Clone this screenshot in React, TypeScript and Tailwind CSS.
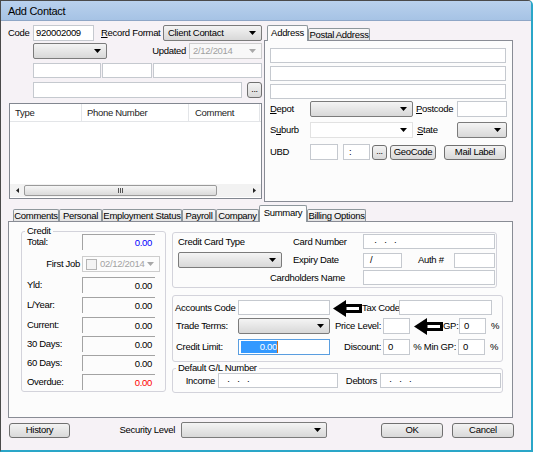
import React from 'react';

type P = { className?: string; children?: React.ReactNode };

const Caret = ({ color = '#000' }: { color?: string }) => (
  <svg width="7" height="4" viewBox="0 0 7 4" className="shrink-0">
    <path d="M0 0h7L3.5 4z" fill={color} />
  </svg>
);

const Input = ({ className = '', children }: P) => (
  <div className={`shrink-0 bg-white border border-[#c5c9cf] flex items-center px-[3px] overflow-hidden whitespace-pre ${className}`}>
    {children}
  </div>
);

const Select = ({ className = '', children }: P) => (
  <div className={`shrink-0 flex items-center justify-between rounded-[2px] border border-[#7b7b7b] bg-linear-to-b from-[#f4f4f4] to-[#d8d8d8] pl-[4px] pr-[5px] ${className}`}>
    <span>{children}</span>
    <Caret />
  </div>
);

const Btn = ({ className = '', children }: P) => (
  <div className={`shrink-0 flex items-center justify-center rounded-[3px] border border-[#707070] bg-linear-to-b from-[#f3f3f3] to-[#d9d9d9] ${className}`}>
    {children}
  </div>
);

const Tab = ({ active, className = '', children }: P & { active?: boolean }) =>
  active ? (
    <div className={`relative z-10 -mb-px shrink-0 flex justify-center pt-[1px] border border-b-0 border-[#8e979c] bg-[#fcfcfc] rounded-t-[2px] ${className}`}>
      {children}
    </div>
  ) : (
    <div className={`shrink-0 flex justify-center border border-b-0 border-[#8e979c] bg-linear-to-b from-[#f7f7f7] to-[#e3e3e3] rounded-t-[2px] ${className}`}>
      {children}
    </div>
  );

const Sunk = ({ color = 'text-black', children }: { color?: string; children?: React.ReactNode }) => (
  <div className={`shrink-0 w-[73px] h-[16px] border-t border-l border-[#a3a3a3] flex items-center justify-end pr-[3px] ${color}`}>
    {children}
  </div>
);

const BigArrow = ({ className = '' }: P) => (
  <svg className={`shrink-0 ${className}`} width="29" height="17" viewBox="0 0 29 17">
    <path d="M0 8.5 L13 0 L13 17 Z" fill="#000" />
    <rect x="12" y="5.5" width="15.5" height="6" fill="#fff" stroke="#000" strokeWidth="3" />
  </svg>
);

const Tri = ({ dir }: { dir: 'l' | 'r' }) => (
  <svg width="3" height="5" viewBox="0 0 3 5">
    <path d={dir === 'l' ? 'M3 0v5L0 2.5z' : 'M0 0v5l3-2.5z'} fill="#222" />
  </svg>
);

export default function App() {
  return (
    <div className="w-[533px] h-[452px] overflow-hidden whitespace-nowrap bg-[#f6f2f6] border-l border-t border-[#4a4a4a] border-r-2 border-r-[#2aa6c8] border-b-2 border-b-[#2aa6c8] rounded-tr-[5px] text-black text-[9.5px] tracking-[-0.3px] leading-[12px] font-['Liberation_Sans',Arial,sans-serif]">
      {/* Title bar */}
      <div className="h-[20px] flex items-center pl-[7px] bg-linear-to-b from-[#b9d1ed] to-[#a6c3e5] border-b border-[#8ea6c6] text-[11px]">
        Add Contact
      </div>

      {/* Top section */}
      <div className="h-[184px] flex">
        {/* Left column */}
        <div className="ml-[7px] w-[254px] pt-[4px] flex flex-col">
          <div className="h-[16px] flex items-center">
            <span className="w-[25px]">Code</span>
            <Input className="w-[61px] h-[16px] pl-[2px]">920002009</Input>
            <span className="ml-[7px] w-[62px]">
              <u>R</u>ecord Format
            </span>
            <Select className="w-[99px] h-[16px]">Client Contact</Select>
          </div>
          <div className="mt-[2px] h-[16px] flex items-center">
            <Select className="ml-[25px] w-[74px] h-[16px]" />
            <span className="ml-auto mr-[3px]">Updated</span>
            <div className="w-[73px] h-[16px] border border-[#cdcdcd] bg-[#f8f8f8] flex items-center justify-between pl-[3px] pr-[5px] text-[#a0a0a0]">
              <span>2/12/2014</span>
              <Caret color="#a8a8a8" />
            </div>
          </div>
          <div className="mt-[4px] h-[15px] flex items-center">
            <Input className="ml-[25px] w-[68px] h-[15px]" />
            <Input className="ml-[1px] w-[50px] h-[15px]" />
            <Input className="ml-[1px] w-[109px] h-[15px]" />
          </div>
          <div className="mt-[4px] h-[16px] flex items-center">
            <Input className="ml-[25px] w-[209px] h-[16px]" />
            <Btn className="ml-[5px] w-[15px] h-[16px] text-[9px] items-end pb-[2px]">...</Btn>
          </div>
          {/* Phone list */}
          <div className="mt-[5px] ml-[1px] w-[253px] h-[96px] bg-white border border-[#828790] flex flex-col">
            <div className="h-[18px] flex items-center border-b border-[#e3e5e8] text-[#222]">
              <div className="w-[72px] h-full flex items-center pl-[5px] border-r border-[#e3e5e8]">Type</div>
              <div className="w-[107px] h-full flex items-center pl-[5px] border-r border-[#e3e5e8]">Phone Number</div>
              <div className="w-[71px] h-full flex items-center pl-[6px] border-r border-[#e3e5e8]">Comment</div>
            </div>
            <div className="flex-1" />
            <div className="h-[13px] mb-[1px] flex items-center bg-[#f2f2f2]">
              <div className="w-[14px] flex justify-center">
                <Tri dir="l" />
              </div>
              <div className="w-[193px] h-[11px] rounded-[2px] border border-[#9a9a9a] bg-linear-to-b from-[#f6f6f6] to-[#dadada] flex items-center justify-center gap-[1px]">
                <div className="w-px h-[5px] bg-[#555]" />
                <div className="w-px h-[5px] bg-[#555]" />
                <div className="w-px h-[5px] bg-[#555]" />
              </div>
              <div className="flex-1" />
              <div className="w-[14px] flex justify-center">
                <Tri dir="r" />
              </div>
            </div>
          </div>
        </div>

        {/* Right column: address tabs */}
        <div className="ml-[2px] w-[249px] pt-[4px] flex flex-col">
          <div className="h-[15px] flex items-end">
            <Tab active className="ml-[3px] w-[41px] h-[16px]">Address</Tab>
            <Tab className="w-[62px] h-[12px]">Postal Address</Tab>
          </div>
          <div className="h-[162px] border border-[#898c95] bg-[#fcfcfc] px-[5px] flex flex-col">
            <Input className="mt-[7px] w-[236px] h-[15px]" />
            <Input className="mt-[3px] w-[236px] h-[15px]" />
            <Input className="mt-[3px] w-[236px] h-[15px]" />
            <div className="mt-[2px] h-[16px] flex items-center">
              <span className="w-[40px]">
                <u>D</u>epot
              </span>
              <Select className="w-[103px] h-[16px]" />
              <span className="ml-[3px] w-[41px]">
                <u>P</u>ostcode
              </span>
              <Input className="w-[50px] h-[16px]" />
            </div>
            <div className="mt-[5px] h-[16px] flex items-center">
              <span className="w-[40px]">
                S<u>u</u>burb
              </span>
              <div className="w-[103px] h-[16px] bg-white border border-[#e2e2e2] flex items-center justify-end pr-[5px]">
                <Caret />
              </div>
              <span className="ml-[4px] w-[40px]">
                <u>S</u>tate
              </span>
              <Select className="w-[50px] h-[16px]" />
            </div>
            <div className="mt-[6px] h-[16px] flex items-center">
              <span className="w-[40px]">UBD</span>
              <Input className="w-[28px] h-[16px]" />
              <Input className="ml-[5px] w-[27px] h-[16px] pl-[5px]">:</Input>
              <Btn className="ml-[2px] w-[15px] h-[15px] text-[9px] items-end pb-[2px]">...</Btn>
              <Btn className="ml-[3px] w-[46px] h-[15px]">GeoCode</Btn>
              <Btn className="ml-[8px] w-[62px] h-[15px]">Mail Label</Btn>
            </div>
          </div>
        </div>
      </div>

      {/* Lower tabs */}
      <div className="h-[16px] flex items-end pl-[12px]">
        <Tab className="w-[46px] h-[12px]">Comments</Tab>
        <Tab className="w-[43px] h-[12px]">Personal</Tab>
        <Tab className="w-[80px] h-[12px]">Employment Status</Tab>
        <Tab className="w-[34px] h-[12px]">Payroll</Tab>
        <Tab className="w-[43px] h-[12px]">Company</Tab>
        <Tab active className="w-[48px] h-[17px]">Summary</Tab>
        <Tab className="w-[59px] h-[12px]">Billing Options</Tab>
      </div>
      <div className="ml-[7px] w-[505px] h-[197px] border border-[#898c95] bg-[#fcfcfc] flex items-start">
        {/* Credit group */}
        <fieldset className="ml-[12px] mt-[4px] w-[145px] h-[166px] border border-[#d3d3db] rounded-[3px] flex flex-col">
          <legend className="ml-[3px] px-[2px] leading-[10px]">Credit</legend>
          <div className="-mt-[2px] h-[16px] flex items-center">
            <span className="w-[60px] pl-[5px]">Total:</span>
            <Sunk color="text-[#0000ff]">0.00</Sunk>
          </div>
          <div className="mt-[6px] h-[16px] flex items-center">
            <span className="w-[60px] text-right pr-[2px]">First Job</span>
            <div className="w-[78px] h-[16px] border border-[#cdcdcd] flex items-center pl-[3px] pr-[5px] text-[#a3a3a3]">
              <div className="w-[11px] h-[11px] border border-[#b5b5b5] bg-[#f4f4f4]" />
              <span className="ml-[3px]">02/12/2014</span>
              <span className="ml-auto">
                <Caret color="#a8a8a8" />
              </span>
            </div>
          </div>
          <div className="mt-[5px] h-[16px] flex items-center">
            <span className="w-[60px] pl-[5px]">Yld:</span>
            <Sunk>0.00</Sunk>
          </div>
          <div className="mt-[4px] h-[16px] flex items-center">
            <span className="w-[60px] pl-[5px]">L/Year:</span>
            <Sunk>0.00</Sunk>
          </div>
          <div className="mt-[4px] h-[16px] flex items-center">
            <span className="w-[60px] pl-[5px]">Current:</span>
            <Sunk>0.00</Sunk>
          </div>
          <div className="mt-[3px] h-[16px] flex items-center">
            <span className="w-[60px] pl-[5px]">30 Days:</span>
            <Sunk>0.00</Sunk>
          </div>
          <div className="mt-[3px] h-[16px] flex items-center">
            <span className="w-[60px] pl-[5px]">60 Days:</span>
            <Sunk>0.00</Sunk>
          </div>
          <div className="mt-[3px] h-[16px] flex items-center">
            <span className="w-[60px] pl-[5px]">Overdue:</span>
            <Sunk color="text-[#ff0000]">0.00</Sunk>
          </div>
        </fieldset>

        {/* Middle/right column */}
        <div className="ml-[6px] flex flex-col">
          {/* Credit card */}
          <div className="mt-[10px] w-[325px] h-[56px] border border-[#d3d3db] rounded-[3px] pl-[5px] flex flex-col">
            <div className="mt-[1px] h-[15px] flex items-center">
              <span className="w-[115px]">Credit Card Type</span>
              <span className="w-[70px]">Card Number</span>
              <Input className="w-[132px] h-[15px] pl-[10px]">{'·   ·   ·'}</Input>
            </div>
            <div className="mt-[3px] h-[16px] flex items-center">
              <Select className="w-[104px] h-[16px]" />
              <span className="ml-[11px] w-[70px]">Expiry Date</span>
              <Input className="w-[39px] h-[15px] pl-[6px]">/</Input>
              <span className="w-[52px] pl-[16px]">Auth #</span>
              <Input className="w-[41px] h-[15px]" />
            </div>
            <div className="mt-[2px] h-[15px] flex items-center">
              <span className="w-[185px] text-right pr-[18px]">Cardholders Name</span>
              <Input className="w-[132px] h-[15px]" />
            </div>
          </div>

          {/* Accounts */}
          <div className="mt-[7px] w-[331px] h-[67px] border border-[#d3d3db] rounded-[3px] flex flex-col">
            <div className="mt-[4px] h-[15px] flex items-center">
              <span className="w-[65px] pl-[2px]">Accounts Code</span>
              <Input className="w-[92px] h-[15px]" />
              <BigArrow className="ml-[3px] mt-[2px]" />
              <span className="w-[37px]">Tax Code</span>
              <Input className="w-[93px] h-[15px]" />
            </div>
            <div className="mt-[3px] h-[16px] flex items-center">
              <span className="w-[65px] pl-[3px]">Trade Terms:</span>
              <Select className="w-[92px] h-[16px]" />
              <span className="w-[52px] text-right pr-[1px]">Price Level:</span>
              <Input className="ml-[1px] w-[27px] h-[16px]" />
              <BigArrow className="ml-[4px]" />
              <span className="w-[16px]">GP:</span>
              <Input className="w-[27px] h-[16px] pl-[4px]">0</Input>
              <span className="ml-[5px]">%</span>
            </div>
            <div className="mt-[5px] h-[16px] flex items-center">
              <span className="w-[65px] pl-[3px]">Credit Limit:</span>
              <div className="w-[92px] h-[16px] bg-white border border-[#5a9ee0] flex items-center pl-[2px]">
                <span className="w-[36px] h-[12px] bg-[#3399ff] text-white flex items-center justify-end">0.00</span>
                <span className="w-px h-[12px] bg-[#d0701c]" />
              </div>
              <span className="w-[53px] text-right pr-[2px]">Discount:</span>
              <Input className="w-[27px] h-[16px] pl-[4px]">0</Input>
              <span className="w-[48px] text-right pr-[2px]">% Min GP:</span>
              <Input className="w-[27px] h-[16px] pl-[4px]">0</Input>
              <span className="ml-[5px]">%</span>
            </div>
          </div>

          {/* Default G/L */}
          <fieldset className="mt-[1px] w-[331px] h-[30px] border border-[#d3d3db] rounded-[3px] flex flex-col">
            <legend className="ml-[3px] px-[2px] leading-[10px]">Default G/L Number</legend>
            <div className="h-[15px] flex items-center">
              <span className="w-[45px] text-right pr-[3px]">Income</span>
              <Input className="w-[120px] h-[15px] pl-[8px]">{'·   ·   ·'}</Input>
              <span className="w-[42px] text-right pr-[3px]">Debtors</span>
              <Input className="w-[121px] h-[15px] pl-[8px]">{'·   ·   ·'}</Input>
            </div>
          </fieldset>
        </div>
      </div>

      {/* Bottom buttons */}
      <div className="mt-[4px] h-[16px] flex items-center">
        <Btn className="ml-[8px] w-[61px] h-[15px]">History</Btn>
        <span className="w-[111px] text-right pr-[6px]">Security Level</span>
        <Select className="w-[146px] h-[16px]" />
        <Btn className="ml-[54px] w-[62px] h-[15px]">OK</Btn>
        <Btn className="ml-[9px] w-[62px] h-[15px]">Cancel</Btn>
      </div>
    </div>
  );
}
